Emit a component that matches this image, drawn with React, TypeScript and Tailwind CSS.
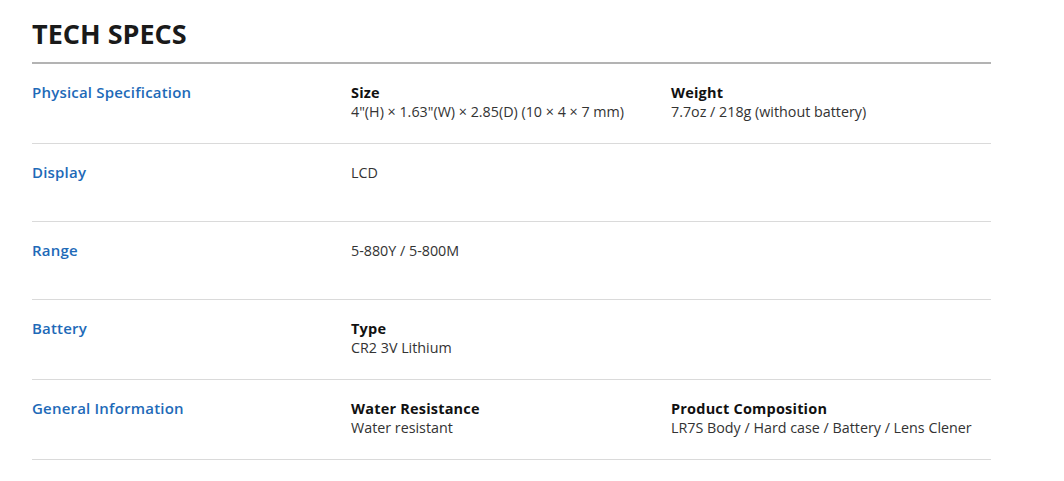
import React from "react";

type Item = { title?: string; value: string };
type Row = { label: string; items: Item[]; h: string };

const rows: Row[] = [
  {
    label: "Physical Specification",
    h: "h-[80px]",
    items: [
      { title: "Size", value: "4\"(H) × 1.63\"(W) × 2.85(D) (10 × 4 × 7 mm)" },
      { title: "Weight", value: "7.7oz / 218g (without battery)" },
    ],
  },
  { label: "Display", h: "h-[78px]", items: [{ value: "LCD" }] },
  { label: "Range", h: "h-[78px]", items: [{ value: "5-880Y / 5-800M" }] },
  { label: "Battery", h: "h-[80px]", items: [{ title: "Type", value: "CR2 3V Lithium" }] },
  {
    label: "General Information",
    h: "h-[80px]",
    items: [
      { title: "Water Resistance", value: "Water resistant" },
      { title: "Product Composition", value: "LR7S Body / Hard case / Battery / Lens Clener" },
    ],
  },
];

export default function App() {
  return (
    <div className="w-[1064px] h-[481px] bg-white font-['Open_Sans',sans-serif] overflow-hidden">
      <div className="ml-[32px] w-[959px] pt-[16px]">
        <h1 className="text-[27px] leading-[35px] font-bold text-[#1a1a1a] tracking-[0px] pb-[11px] border-b-2 border-[#b3b3b3]">
          TECH SPECS
        </h1>
        {rows.map((r) => (
          <div key={r.label} className={`flex border-b border-[#dadada] pt-[19px] ${r.h}`}>
            <div className="w-[319px] text-[15px] leading-[19px] font-semibold tracking-[0.2px] text-[#1e6ab8]">
              {r.label}
            </div>
            {r.items.map((it, i) => (
              <div key={i} className="w-[320px] text-[14.3px] leading-[19px] text-[#333]">
                {it.title && (
                  <div className="text-[14.5px] font-bold tracking-[0.2px] text-[#111]">{it.title}</div>
                )}
                <div>{it.value}</div>
              </div>
            ))}
          </div>
        ))}
      </div>
    </div>
  );
}
